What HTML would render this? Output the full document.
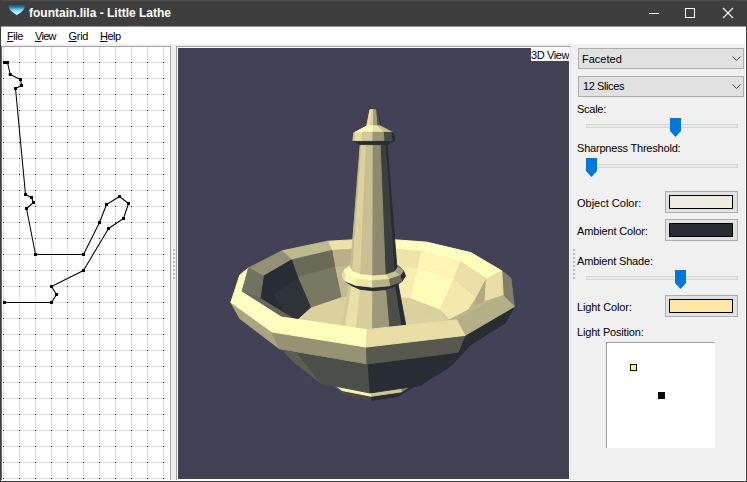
<!DOCTYPE html>
<html><head><meta charset="utf-8"><title>fountain.lila - Little Lathe</title>
<style>
html,body{margin:0;padding:0;}
body{width:747px;height:482px;overflow:hidden;background:#f0f0f0;font-family:"Liberation Sans",sans-serif;font-size:11px;color:#000;position:relative;}
.abs{position:absolute;}
#titlebar{left:0;top:0;width:747px;height:26px;background:#3e3e3e;border-top:1px solid #4c4c4c;box-sizing:border-box;}
#titleedge{left:0;top:26px;width:747px;height:1px;background:#9a9a9a;}
#title{left:29px;top:6px;color:#fff;font-weight:bold;font-size:12px;line-height:14px;white-space:nowrap;}
#menubar{left:1px;top:27px;width:745px;height:17px;background:#fff;}
.menu{top:30px;font-size:11px;line-height:12px;white-space:nowrap;}
.menu u{text-decoration:underline;text-underline-offset:1px;text-decoration-thickness:1px;}
#bl{left:0;top:0;width:1px;height:482px;background:#3d3d3d;}
#br{left:746px;top:26px;width:1px;height:456px;background:#3d3d3d;}
#bb{left:0;top:481px;width:747px;height:1px;background:#3d3d3d;}
#wr{left:745px;top:44px;width:1px;height:437px;background:#fff;}
#wb{left:1px;top:480px;width:745px;height:1px;background:#fff;}
#leftpanel{left:1px;top:46px;width:169px;height:434px;background:#fff;border-top:1px solid #a0a0a0;border-left:1px solid #696969;box-sizing:border-box;}
#view{left:178px;top:48px;width:391px;height:431px;background:#424156;}
#viewb{left:176px;top:46px;width:395px;height:435px;box-sizing:border-box;border-top:1px solid #a0a0a0;border-left:1px solid #a0a0a0;border-right:1px solid #e3e3e3;border-bottom:1px solid #fff;background:#fff;}
#lbl3d{left:531px;top:48px;width:38px;height:12px;padding-top:1px;background:#fff;font-size:11px;line-height:13px;white-space:nowrap;letter-spacing:-0.4px;overflow:hidden;}
.combo{left:578px;width:166px;height:21px;box-sizing:border-box;background:#e1e1e1;border:1px solid #adadad;}
.combo span{position:absolute;left:3px;top:3px;font-size:11px;line-height:13px;}
.lab{left:577px;font-size:11px;line-height:13px;white-space:nowrap;}
.track{left:586px;width:152px;height:4px;box-sizing:border-box;background:#e7eaea;border:1px solid #d6d6d6;}
.cbtn{left:665px;width:73px;height:22px;box-sizing:border-box;background:#e1e1e1;border:1px solid #adadad;}
.cbtn div{position:absolute;left:3px;top:3px;width:64px;height:14px;box-sizing:border-box;border:1px solid #000;}
</style></head><body>
<div id="titlebar" class="abs"></div><div id="titleedge" class="abs"></div>
<svg class="abs" style="left:0;top:0" width="747" height="27">
<defs><linearGradient id="ig" x1="0" y1="0" x2="0" y2="1"><stop offset="0" stop-color="#26405c"/><stop offset="0.28" stop-color="#2f86ae"/><stop offset="0.5" stop-color="#6fd6ec"/><stop offset="0.85" stop-color="#c8f6fb"/><stop offset="1" stop-color="#ffffff"/></linearGradient></defs>
<rect x="15.3" y="15" width="2.8" height="7" fill="#33475c" opacity="0.55"/>
<path d="M8.8 4.6 L24.8 4.6 L24.8 7 Q24 11.2 16.8 15 Q9.6 11.2 8.8 7 Z" fill="url(#ig)"/>
<path d="M649 13.5 H659" stroke="#fff" stroke-width="1"/>
<rect x="685.5" y="8.5" width="9" height="9" fill="none" stroke="#fff" stroke-width="1"/>
<path d="M723 8 L733 18 M733 8 L723 18" stroke="#fff" stroke-width="1.1"/>
</svg>
<div id="title" class="abs">fountain.lila - Little Lathe</div>
<div id="menubar" class="abs"></div>
<div class="abs menu" style="left:7px;letter-spacing:-0.45px"><u>F</u>ile</div>
<div class="abs menu" style="left:35px;letter-spacing:-0.7px"><u>V</u>iew</div>
<div class="abs menu" style="left:68.5px;letter-spacing:-0.3px"><u>G</u>rid</div>
<div class="abs menu" style="left:100px;letter-spacing:-0.5px"><u>H</u>elp</div>

<div id="leftpanel" class="abs"></div>
<svg class="abs" style="left:2px;top:47px" width="168" height="433" viewBox="2 47 168 433">
<rect x="3" y="47" width="1" height="433" fill="#dedede"/>
<rect x="19" y="47" width="1" height="433" fill="#dedede"/>
<rect x="35" y="47" width="1" height="433" fill="#dedede"/>
<rect x="51" y="47" width="1" height="433" fill="#dedede"/>
<rect x="67" y="47" width="1" height="433" fill="#dedede"/>
<rect x="83" y="47" width="1" height="433" fill="#dedede"/>
<rect x="99" y="47" width="1" height="433" fill="#dedede"/>
<rect x="115" y="47" width="1" height="433" fill="#dedede"/>
<rect x="131" y="47" width="1" height="433" fill="#dedede"/>
<rect x="147" y="47" width="1" height="433" fill="#dedede"/>
<rect x="163" y="47" width="1" height="433" fill="#dedede"/>
<rect x="2" y="62" width="166" height="1" fill="#dedede"/>
<rect x="2" y="78" width="166" height="1" fill="#dedede"/>
<rect x="2" y="94" width="166" height="1" fill="#dedede"/>
<rect x="2" y="110" width="166" height="1" fill="#dedede"/>
<rect x="2" y="126" width="166" height="1" fill="#dedede"/>
<rect x="2" y="142" width="166" height="1" fill="#dedede"/>
<rect x="2" y="158" width="166" height="1" fill="#dedede"/>
<rect x="2" y="174" width="166" height="1" fill="#dedede"/>
<rect x="2" y="190" width="166" height="1" fill="#dedede"/>
<rect x="2" y="206" width="166" height="1" fill="#dedede"/>
<rect x="2" y="222" width="166" height="1" fill="#dedede"/>
<rect x="2" y="238" width="166" height="1" fill="#dedede"/>
<rect x="2" y="254" width="166" height="1" fill="#dedede"/>
<rect x="2" y="270" width="166" height="1" fill="#dedede"/>
<rect x="2" y="286" width="166" height="1" fill="#dedede"/>
<rect x="2" y="302" width="166" height="1" fill="#dedede"/>
<rect x="2" y="318" width="166" height="1" fill="#dedede"/>
<rect x="2" y="334" width="166" height="1" fill="#dedede"/>
<rect x="2" y="350" width="166" height="1" fill="#dedede"/>
<rect x="2" y="366" width="166" height="1" fill="#dedede"/>
<rect x="2" y="382" width="166" height="1" fill="#dedede"/>
<rect x="2" y="398" width="166" height="1" fill="#dedede"/>
<rect x="2" y="414" width="166" height="1" fill="#dedede"/>
<rect x="2" y="430" width="166" height="1" fill="#dedede"/>
<rect x="2" y="446" width="166" height="1" fill="#dedede"/>
<rect x="2" y="462" width="166" height="1" fill="#dedede"/>
<rect x="2" y="478" width="166" height="1" fill="#dedede"/>
<path d="M3 62h1v1h-1zM3 78h1v1h-1zM3 94h1v1h-1zM3 110h1v1h-1zM3 126h1v1h-1zM3 142h1v1h-1zM3 158h1v1h-1zM3 174h1v1h-1zM3 190h1v1h-1zM3 206h1v1h-1zM3 222h1v1h-1zM3 238h1v1h-1zM3 254h1v1h-1zM3 270h1v1h-1zM3 286h1v1h-1zM3 302h1v1h-1zM3 318h1v1h-1zM3 334h1v1h-1zM3 350h1v1h-1zM3 366h1v1h-1zM3 382h1v1h-1zM3 398h1v1h-1zM3 414h1v1h-1zM3 430h1v1h-1zM3 446h1v1h-1zM3 462h1v1h-1zM3 478h1v1h-1zM19 62h1v1h-1zM19 78h1v1h-1zM19 94h1v1h-1zM19 110h1v1h-1zM19 126h1v1h-1zM19 142h1v1h-1zM19 158h1v1h-1zM19 174h1v1h-1zM19 190h1v1h-1zM19 206h1v1h-1zM19 222h1v1h-1zM19 238h1v1h-1zM19 254h1v1h-1zM19 270h1v1h-1zM19 286h1v1h-1zM19 302h1v1h-1zM19 318h1v1h-1zM19 334h1v1h-1zM19 350h1v1h-1zM19 366h1v1h-1zM19 382h1v1h-1zM19 398h1v1h-1zM19 414h1v1h-1zM19 430h1v1h-1zM19 446h1v1h-1zM19 462h1v1h-1zM19 478h1v1h-1zM35 62h1v1h-1zM35 78h1v1h-1zM35 94h1v1h-1zM35 110h1v1h-1zM35 126h1v1h-1zM35 142h1v1h-1zM35 158h1v1h-1zM35 174h1v1h-1zM35 190h1v1h-1zM35 206h1v1h-1zM35 222h1v1h-1zM35 238h1v1h-1zM35 254h1v1h-1zM35 270h1v1h-1zM35 286h1v1h-1zM35 302h1v1h-1zM35 318h1v1h-1zM35 334h1v1h-1zM35 350h1v1h-1zM35 366h1v1h-1zM35 382h1v1h-1zM35 398h1v1h-1zM35 414h1v1h-1zM35 430h1v1h-1zM35 446h1v1h-1zM35 462h1v1h-1zM35 478h1v1h-1zM51 62h1v1h-1zM51 78h1v1h-1zM51 94h1v1h-1zM51 110h1v1h-1zM51 126h1v1h-1zM51 142h1v1h-1zM51 158h1v1h-1zM51 174h1v1h-1zM51 190h1v1h-1zM51 206h1v1h-1zM51 222h1v1h-1zM51 238h1v1h-1zM51 254h1v1h-1zM51 270h1v1h-1zM51 286h1v1h-1zM51 302h1v1h-1zM51 318h1v1h-1zM51 334h1v1h-1zM51 350h1v1h-1zM51 366h1v1h-1zM51 382h1v1h-1zM51 398h1v1h-1zM51 414h1v1h-1zM51 430h1v1h-1zM51 446h1v1h-1zM51 462h1v1h-1zM51 478h1v1h-1zM67 62h1v1h-1zM67 78h1v1h-1zM67 94h1v1h-1zM67 110h1v1h-1zM67 126h1v1h-1zM67 142h1v1h-1zM67 158h1v1h-1zM67 174h1v1h-1zM67 190h1v1h-1zM67 206h1v1h-1zM67 222h1v1h-1zM67 238h1v1h-1zM67 254h1v1h-1zM67 270h1v1h-1zM67 286h1v1h-1zM67 302h1v1h-1zM67 318h1v1h-1zM67 334h1v1h-1zM67 350h1v1h-1zM67 366h1v1h-1zM67 382h1v1h-1zM67 398h1v1h-1zM67 414h1v1h-1zM67 430h1v1h-1zM67 446h1v1h-1zM67 462h1v1h-1zM67 478h1v1h-1zM83 62h1v1h-1zM83 78h1v1h-1zM83 94h1v1h-1zM83 110h1v1h-1zM83 126h1v1h-1zM83 142h1v1h-1zM83 158h1v1h-1zM83 174h1v1h-1zM83 190h1v1h-1zM83 206h1v1h-1zM83 222h1v1h-1zM83 238h1v1h-1zM83 254h1v1h-1zM83 270h1v1h-1zM83 286h1v1h-1zM83 302h1v1h-1zM83 318h1v1h-1zM83 334h1v1h-1zM83 350h1v1h-1zM83 366h1v1h-1zM83 382h1v1h-1zM83 398h1v1h-1zM83 414h1v1h-1zM83 430h1v1h-1zM83 446h1v1h-1zM83 462h1v1h-1zM83 478h1v1h-1zM99 62h1v1h-1zM99 78h1v1h-1zM99 94h1v1h-1zM99 110h1v1h-1zM99 126h1v1h-1zM99 142h1v1h-1zM99 158h1v1h-1zM99 174h1v1h-1zM99 190h1v1h-1zM99 206h1v1h-1zM99 222h1v1h-1zM99 238h1v1h-1zM99 254h1v1h-1zM99 270h1v1h-1zM99 286h1v1h-1zM99 302h1v1h-1zM99 318h1v1h-1zM99 334h1v1h-1zM99 350h1v1h-1zM99 366h1v1h-1zM99 382h1v1h-1zM99 398h1v1h-1zM99 414h1v1h-1zM99 430h1v1h-1zM99 446h1v1h-1zM99 462h1v1h-1zM99 478h1v1h-1zM115 62h1v1h-1zM115 78h1v1h-1zM115 94h1v1h-1zM115 110h1v1h-1zM115 126h1v1h-1zM115 142h1v1h-1zM115 158h1v1h-1zM115 174h1v1h-1zM115 190h1v1h-1zM115 206h1v1h-1zM115 222h1v1h-1zM115 238h1v1h-1zM115 254h1v1h-1zM115 270h1v1h-1zM115 286h1v1h-1zM115 302h1v1h-1zM115 318h1v1h-1zM115 334h1v1h-1zM115 350h1v1h-1zM115 366h1v1h-1zM115 382h1v1h-1zM115 398h1v1h-1zM115 414h1v1h-1zM115 430h1v1h-1zM115 446h1v1h-1zM115 462h1v1h-1zM115 478h1v1h-1zM131 62h1v1h-1zM131 78h1v1h-1zM131 94h1v1h-1zM131 110h1v1h-1zM131 126h1v1h-1zM131 142h1v1h-1zM131 158h1v1h-1zM131 174h1v1h-1zM131 190h1v1h-1zM131 206h1v1h-1zM131 222h1v1h-1zM131 238h1v1h-1zM131 254h1v1h-1zM131 270h1v1h-1zM131 286h1v1h-1zM131 302h1v1h-1zM131 318h1v1h-1zM131 334h1v1h-1zM131 350h1v1h-1zM131 366h1v1h-1zM131 382h1v1h-1zM131 398h1v1h-1zM131 414h1v1h-1zM131 430h1v1h-1zM131 446h1v1h-1zM131 462h1v1h-1zM131 478h1v1h-1zM147 62h1v1h-1zM147 78h1v1h-1zM147 94h1v1h-1zM147 110h1v1h-1zM147 126h1v1h-1zM147 142h1v1h-1zM147 158h1v1h-1zM147 174h1v1h-1zM147 190h1v1h-1zM147 206h1v1h-1zM147 222h1v1h-1zM147 238h1v1h-1zM147 254h1v1h-1zM147 270h1v1h-1zM147 286h1v1h-1zM147 302h1v1h-1zM147 318h1v1h-1zM147 334h1v1h-1zM147 350h1v1h-1zM147 366h1v1h-1zM147 382h1v1h-1zM147 398h1v1h-1zM147 414h1v1h-1zM147 430h1v1h-1zM147 446h1v1h-1zM147 462h1v1h-1zM147 478h1v1h-1zM163 62h1v1h-1zM163 78h1v1h-1zM163 94h1v1h-1zM163 110h1v1h-1zM163 126h1v1h-1zM163 142h1v1h-1zM163 158h1v1h-1zM163 174h1v1h-1zM163 190h1v1h-1zM163 206h1v1h-1zM163 222h1v1h-1zM163 238h1v1h-1zM163 254h1v1h-1zM163 270h1v1h-1zM163 286h1v1h-1zM163 302h1v1h-1zM163 318h1v1h-1zM163 334h1v1h-1zM163 350h1v1h-1zM163 366h1v1h-1zM163 382h1v1h-1zM163 398h1v1h-1zM163 414h1v1h-1zM163 430h1v1h-1zM163 446h1v1h-1zM163 462h1v1h-1zM163 478h1v1h-1z" fill="#2a2a2a"/>
<polyline points="4.5,62.5 7.5,62.5 10.2,74.5 20.5,79.5 21.5,85.5 15.5,88.5 25.5,194.5 31.5,197.5 33.5,202.5 26.5,208.5 35.5,254.5 83.5,254.5 99.5,222.5 106.5,204.5 119.5,196.5 128.5,203.5 123.5,218.5 108.5,228.5 83.5,270.5 51.5,286.5 56.5,294.5 51.5,302.5 4.5,302.5" fill="none" stroke="#000" stroke-width="1.05" stroke-linejoin="round"/>
<path d="M3.0 61.0h3v3h-3zM6.0 61.0h3v3h-3zM8.7 73.0h3v3h-3zM19.0 78.0h3v3h-3zM20.0 84.0h3v3h-3zM14.0 87.0h3v3h-3zM24.0 193.0h3v3h-3zM30.0 196.0h3v3h-3zM32.0 201.0h3v3h-3zM25.0 207.0h3v3h-3zM34.0 253.0h3v3h-3zM82.0 253.0h3v3h-3zM98.0 221.0h3v3h-3zM105.0 203.0h3v3h-3zM118.0 195.0h3v3h-3zM127.0 202.0h3v3h-3zM122.0 217.0h3v3h-3zM107.0 227.0h3v3h-3zM82.0 269.0h3v3h-3zM50.0 285.0h3v3h-3zM55.0 293.0h3v3h-3zM50.0 301.0h3v3h-3zM3.0 301.0h3v3h-3z" fill="#000"/>
</svg>
<div class="abs" style="left:170px;top:46px;width:1px;height:434px;background:#a8a8a8"></div>

<div id="viewb" class="abs"></div>
<div id="view" class="abs"></div>
<svg class="abs" style="left:178px;top:48px" width="391" height="431" viewBox="178 48 391 431" shape-rendering="auto">
<polygon points="376.8,247.7 331.9,250.5 327.5,241.2 377.1,238.4" fill="#ede2a8" stroke="#ede2a8" stroke-width="0.9" stroke-linejoin="round"/>
<polygon points="421.4,251.4 376.8,247.7 377.1,238.4 426.5,242.1" fill="#fffeba" stroke="#fffeba" stroke-width="0.9" stroke-linejoin="round"/>
<polygon points="376.6,264.1 334.8,267.1 331.9,250.5 376.8,247.7" fill="#b7b088" stroke="#b7b088" stroke-width="0.9" stroke-linejoin="round"/>
<polygon points="418.1,268.1 376.6,264.1 376.8,247.7 421.4,251.4" fill="#eee3a9" stroke="#eee3a9" stroke-width="0.9" stroke-linejoin="round"/>
<polygon points="376.1,294.7 341.1,297.8 334.8,267.1 376.6,264.1" fill="#c3bb8f" stroke="#c3bb8f" stroke-width="0.9" stroke-linejoin="round"/>
<polygon points="410.8,298.8 376.1,294.7 376.6,264.1 418.1,268.1" fill="#f8ecae" stroke="#f8ecae" stroke-width="0.9" stroke-linejoin="round"/>
<polygon points="331.9,250.5 291.5,259.9 282.0,250.8 327.5,241.2" fill="#c0b98e" stroke="#c0b98e" stroke-width="0.9" stroke-linejoin="round"/>
<polygon points="334.8,267.1 297.6,277.2 291.5,259.9 331.9,250.5" fill="#6a6a5a" stroke="#6a6a5a" stroke-width="0.9" stroke-linejoin="round"/>
<polygon points="460.7,261.7 421.4,251.4 426.5,242.1 470.9,252.6" fill="#ffffc1" stroke="#ffffc1" stroke-width="0.9" stroke-linejoin="round"/>
<polygon points="341.1,297.8 310.8,308.1 297.6,277.2 334.8,267.1" fill="#797863" stroke="#797863" stroke-width="0.9" stroke-linejoin="round"/>
<polygon points="440.0,310.1 410.8,298.8 418.1,268.1 454.1,279.1" fill="#fffcb9" stroke="#fffcb9" stroke-width="0.9" stroke-linejoin="round"/>
<polygon points="454.1,279.1 418.1,268.1 421.4,251.4 460.7,261.7" fill="#fff4b4" stroke="#fff4b4" stroke-width="0.9" stroke-linejoin="round"/>
<polygon points="374.8,312.6 359.6,314.1 341.1,297.8 376.1,294.7" fill="#dad19d" stroke="#dad19d" stroke-width="0.9" stroke-linejoin="round"/>
<polygon points="389.7,314.5 374.8,312.6 376.1,294.7 410.8,298.8" fill="#dad19d" stroke="#dad19d" stroke-width="0.9" stroke-linejoin="round"/>
<polygon points="359.6,314.1 347.4,318.8 310.8,308.1 341.1,297.8" fill="#dad19d" stroke="#dad19d" stroke-width="0.9" stroke-linejoin="round"/>
<polygon points="401.2,319.7 389.7,314.5 410.8,298.8 440.0,310.1" fill="#dad19d" stroke="#dad19d" stroke-width="0.9" stroke-linejoin="round"/>
<polygon points="421.5,356.5 413.5,344.1 417.2,349.7 426.2,363.6" fill="#272d33" stroke="#272d33" stroke-width="0.9" stroke-linejoin="round"/>
<polygon points="310.8,308.1 292.0,325.2 272.6,294.3 297.6,277.2" fill="#2e3337" stroke="#2e3337" stroke-width="0.9" stroke-linejoin="round"/>
<polygon points="291.5,259.9 263.4,276.2 248.5,267.9 282.0,250.8" fill="#949073" stroke="#949073" stroke-width="0.9" stroke-linejoin="round"/>
<polygon points="297.6,277.2 272.6,294.3 263.4,276.2 291.5,259.9" fill="#272d33" stroke="#272d33" stroke-width="0.9" stroke-linejoin="round"/>
<polygon points="456.7,327.9 440.0,310.1 454.1,279.1 476.7,297.2" fill="#f4e8ac" stroke="#f4e8ac" stroke-width="0.9" stroke-linejoin="round"/>
<polygon points="347.4,318.8 341.5,326.0 292.0,325.2 310.8,308.1" fill="#dad19d" stroke="#dad19d" stroke-width="0.9" stroke-linejoin="round"/>
<polygon points="486.3,279.0 460.7,261.7 470.9,252.6 501.8,270.8" fill="#fffdb9" stroke="#fffdb9" stroke-width="0.9" stroke-linejoin="round"/>
<polygon points="476.7,297.2 454.1,279.1 460.7,261.7 486.3,279.0" fill="#eadfa6" stroke="#eadfa6" stroke-width="0.9" stroke-linejoin="round"/>
<polygon points="406.1,327.1 401.2,319.7 440.0,310.1 456.7,327.9" fill="#dad19d" stroke="#dad19d" stroke-width="0.9" stroke-linejoin="round"/>
<polygon points="326.3,354.7 329.1,368.4 324.4,377.2 321.7,361.6" fill="#fdf0b1" stroke="#fdf0b1" stroke-width="0.9" stroke-linejoin="round"/>
<polygon points="416.8,370.2 421.5,356.5 426.2,363.6 421.4,379.3" fill="#404442" stroke="#404442" stroke-width="0.9" stroke-linejoin="round"/>
<polygon points="324.4,377.2 342.4,390.6 346.0,395.1 329.8,383.0" fill="#585a50" stroke="#585a50" stroke-width="0.9" stroke-linejoin="round"/>
<polygon points="401.5,391.9 421.4,379.3 416.2,384.9 398.3,396.3" fill="#272d33" stroke="#272d33" stroke-width="0.9" stroke-linejoin="round"/>
<polygon points="341.5,326.0 344.0,333.9 293.0,346.6 292.0,325.2" fill="#dad19d" stroke="#dad19d" stroke-width="0.9" stroke-linejoin="round"/>
<polygon points="329.1,368.4 345.5,380.0 342.4,390.6 324.4,377.2" fill="#ffffbd" stroke="#ffffbd" stroke-width="0.9" stroke-linejoin="round"/>
<polygon points="398.7,381.1 416.8,370.2 421.4,379.3 401.5,391.9" fill="#87856c" stroke="#87856c" stroke-width="0.9" stroke-linejoin="round"/>
<polygon points="402.3,334.9 406.1,327.1 456.7,327.9 452.2,349.6" fill="#dad19d" stroke="#dad19d" stroke-width="0.9" stroke-linejoin="round"/>
<polygon points="292.0,325.2 293.0,346.6 271.1,317.0 272.6,294.3" fill="#272d33" stroke="#272d33" stroke-width="0.9" stroke-linejoin="round"/>
<polygon points="349.8,281.4 351.9,285.8 344.0,333.9 341.5,326.0" fill="#d3ca99" stroke="#d3ca99" stroke-width="0.9" stroke-linejoin="round"/>
<polygon points="342.4,390.6 371.5,396.3 371.8,400.3 346.0,395.1" fill="#474a46" stroke="#474a46" stroke-width="0.9" stroke-linejoin="round"/>
<polygon points="371.5,396.3 401.5,391.9 398.3,396.3 371.8,400.3" fill="#272d33" stroke="#272d33" stroke-width="0.9" stroke-linejoin="round"/>
<polygon points="354.6,263.4 350.6,266.9 344.1,270.0 349.5,265.4" fill="#ebe0a7" stroke="#ebe0a7" stroke-width="0.9" stroke-linejoin="round"/>
<polygon points="394.7,286.3 397.7,282.0 406.1,327.1 402.3,334.9" fill="#272d33" stroke="#272d33" stroke-width="0.9" stroke-linejoin="round"/>
<polygon points="396.9,267.5 393.6,263.9 399.1,266.0 403.5,270.7" fill="#85836b" stroke="#85836b" stroke-width="0.9" stroke-linejoin="round"/>
<polygon points="345.5,380.0 371.8,384.9 371.5,396.3 342.4,390.6" fill="#fff3b3" stroke="#fff3b3" stroke-width="0.9" stroke-linejoin="round"/>
<polygon points="452.2,349.6 456.7,327.9 476.7,297.2 474.0,320.2" fill="#bcb58b" stroke="#bcb58b" stroke-width="0.9" stroke-linejoin="round"/>
<polygon points="371.8,384.9 398.7,381.1 401.5,391.9 371.5,396.3" fill="#cdc595" stroke="#cdc595" stroke-width="0.9" stroke-linejoin="round"/>
<polygon points="272.6,294.3 271.1,317.0 260.1,298.3 263.4,276.2" fill="#272d33" stroke="#272d33" stroke-width="0.9" stroke-linejoin="round"/>
<polygon points="351.9,285.8 360.3,289.3 355.3,340.3 344.0,333.9" fill="#ebe0a7" stroke="#ebe0a7" stroke-width="0.9" stroke-linejoin="round"/>
<polygon points="344.1,270.0 346.5,275.0 344.5,280.8 342.0,275.1" fill="#ebe0a7" stroke="#ebe0a7" stroke-width="0.9" stroke-linejoin="round"/>
<polygon points="248.5,267.9 241.9,291.9 230.8,302.4 239.8,274.9" fill="#fffeba" stroke="#fffeba" stroke-width="0.9" stroke-linejoin="round"/>
<polygon points="385.6,289.6 394.7,286.3 402.3,334.9 390.0,341.0" fill="#4c4f49" stroke="#4c4f49" stroke-width="0.9" stroke-linejoin="round"/>
<polygon points="350.6,266.9 352.6,270.8 346.5,275.0 344.1,270.0" fill="#fffab7" stroke="#fffab7" stroke-width="0.9" stroke-linejoin="round"/>
<polygon points="263.4,276.2 260.1,298.3 241.9,291.9 248.5,267.9" fill="#727260" stroke="#727260" stroke-width="0.9" stroke-linejoin="round"/>
<polygon points="399.9,275.7 403.5,270.7 405.5,275.9 401.8,281.5" fill="#272d33" stroke="#272d33" stroke-width="0.9" stroke-linejoin="round"/>
<polygon points="394.0,271.2 396.9,267.5 403.5,270.7 399.9,275.7" fill="#a29d7c" stroke="#a29d7c" stroke-width="0.9" stroke-linejoin="round"/>
<polygon points="344.0,333.9 355.3,340.3 320.6,366.3 293.0,346.6" fill="#dad19d" stroke="#dad19d" stroke-width="0.9" stroke-linejoin="round"/>
<polygon points="474.0,320.2 476.7,297.2 486.3,279.0 484.9,301.5" fill="#b0aa84" stroke="#b0aa84" stroke-width="0.9" stroke-linejoin="round"/>
<polygon points="390.0,341.0 402.3,334.9 452.2,349.6 421.1,368.4" fill="#dad19d" stroke="#dad19d" stroke-width="0.9" stroke-linejoin="round"/>
<polygon points="360.3,289.3 372.8,290.7 372.4,343.0 355.3,340.3" fill="#d7ce9b" stroke="#d7ce9b" stroke-width="0.9" stroke-linejoin="round"/>
<polygon points="372.8,290.7 385.6,289.6 390.0,341.0 372.4,343.0" fill="#9d9979" stroke="#9d9979" stroke-width="0.9" stroke-linejoin="round"/>
<polygon points="503.2,295.5 501.8,270.8 511.0,278.2 514.4,306.6" fill="#817f68" stroke="#817f68" stroke-width="0.9" stroke-linejoin="round"/>
<polygon points="484.9,301.5 486.3,279.0 501.8,270.8 503.2,295.5" fill="#e9dea5" stroke="#e9dea5" stroke-width="0.9" stroke-linejoin="round"/>
<polygon points="344.5,280.8 355.6,285.3 360.3,289.3 351.9,285.8" fill="#272d33" stroke="#272d33" stroke-width="0.9" stroke-linejoin="round"/>
<polygon points="389.7,285.8 401.8,281.5 394.7,286.3 385.6,289.6" fill="#272d33" stroke="#272d33" stroke-width="0.9" stroke-linejoin="round"/>
<polygon points="352.6,270.8 360.8,273.8 356.9,279.1 346.5,275.0" fill="#ffffbe" stroke="#ffffbe" stroke-width="0.9" stroke-linejoin="round"/>
<polygon points="346.5,275.0 356.9,279.1 355.6,285.3 344.5,280.8" fill="#fff5b4" stroke="#fff5b4" stroke-width="0.9" stroke-linejoin="round"/>
<polygon points="385.2,274.1 394.0,271.2 399.9,275.7 388.6,279.5" fill="#c8c092" stroke="#c8c092" stroke-width="0.9" stroke-linejoin="round"/>
<polygon points="360.2,144.5 361.6,144.6 352.6,270.8 350.6,266.9" fill="#c4bc90" stroke="#c4bc90" stroke-width="0.9" stroke-linejoin="round"/>
<polygon points="388.6,279.5 399.9,275.7 401.8,281.5 389.7,285.8" fill="#6b6b5b" stroke="#6b6b5b" stroke-width="0.9" stroke-linejoin="round"/>
<polygon points="385.4,144.6 387.2,144.5 396.9,267.5 394.0,271.2" fill="#272d33" stroke="#272d33" stroke-width="0.9" stroke-linejoin="round"/>
<polygon points="369.9,109.8 370.3,109.6 367.4,125.9 366.6,126.1" fill="#d7ce9b" stroke="#d7ce9b" stroke-width="0.9" stroke-linejoin="round"/>
<polygon points="376.9,109.6 377.5,109.8 380.8,126.1 379.8,125.9" fill="#272d33" stroke="#272d33" stroke-width="0.9" stroke-linejoin="round"/>
<polygon points="355.6,285.3 372.5,287.2 372.8,290.7 360.3,289.3" fill="#272d33" stroke="#272d33" stroke-width="0.9" stroke-linejoin="round"/>
<polygon points="372.5,287.2 389.7,285.8 385.6,289.6 372.8,290.7" fill="#272d33" stroke="#272d33" stroke-width="0.9" stroke-linejoin="round"/>
<polygon points="366.6,126.1 367.4,125.9 355.7,132.5 353.9,132.8" fill="#fff9b7" stroke="#fff9b7" stroke-width="0.9" stroke-linejoin="round"/>
<polygon points="370.3,109.6 371.7,109.5 369.9,125.8 367.4,125.9" fill="#efe3a9" stroke="#efe3a9" stroke-width="0.9" stroke-linejoin="round"/>
<polygon points="375.5,109.5 376.9,109.6 379.8,125.9 377.1,125.8" fill="#51534c" stroke="#51534c" stroke-width="0.9" stroke-linejoin="round"/>
<polygon points="355.3,340.3 372.4,343.0 370.0,375.3 320.6,366.3" fill="#dad19d" stroke="#dad19d" stroke-width="0.9" stroke-linejoin="round"/>
<polygon points="352.8,140.6 354.7,140.6 361.6,144.6 360.2,144.5" fill="#272d33" stroke="#272d33" stroke-width="0.9" stroke-linejoin="round"/>
<polygon points="379.8,125.9 380.8,126.1 393.6,132.7 391.0,132.5" fill="#a49f7d" stroke="#a49f7d" stroke-width="0.9" stroke-linejoin="round"/>
<polygon points="360.8,273.8 372.8,275.0 372.6,280.8 356.9,279.1" fill="#fffcb8" stroke="#fffcb8" stroke-width="0.9" stroke-linejoin="round"/>
<polygon points="353.9,132.8 355.7,132.5 354.7,140.6 352.8,140.6" fill="#cfc696" stroke="#cfc696" stroke-width="0.9" stroke-linejoin="round"/>
<polygon points="372.8,275.0 385.2,274.1 388.6,279.5 372.6,280.8" fill="#eee3a8" stroke="#eee3a8" stroke-width="0.9" stroke-linejoin="round"/>
<polygon points="371.7,109.5 373.6,109.5 373.4,125.8 369.9,125.8" fill="#dbd19d" stroke="#dbd19d" stroke-width="0.9" stroke-linejoin="round"/>
<polygon points="373.6,109.5 375.5,109.5 377.1,125.8 373.4,125.8" fill="#a19d7b" stroke="#a19d7b" stroke-width="0.9" stroke-linejoin="round"/>
<polygon points="392.0,140.6 394.7,140.6 387.2,144.5 385.4,144.6" fill="#272d33" stroke="#272d33" stroke-width="0.9" stroke-linejoin="round"/>
<polygon points="372.4,343.0 390.0,341.0 421.1,368.4 370.0,375.3" fill="#dad19d" stroke="#dad19d" stroke-width="0.9" stroke-linejoin="round"/>
<polygon points="391.0,132.5 393.6,132.7 394.7,140.6 392.0,140.6" fill="#272d33" stroke="#272d33" stroke-width="0.9" stroke-linejoin="round"/>
<polygon points="356.9,279.1 372.6,280.8 372.5,287.2 355.6,285.3" fill="#efe4a9" stroke="#efe4a9" stroke-width="0.9" stroke-linejoin="round"/>
<polygon points="372.6,280.8 388.6,279.5 389.7,285.8 372.5,287.2" fill="#b8b289" stroke="#b8b289" stroke-width="0.9" stroke-linejoin="round"/>
<polygon points="361.6,144.6 366.3,144.6 360.8,273.8 352.6,270.8" fill="#dcd29e" stroke="#dcd29e" stroke-width="0.9" stroke-linejoin="round"/>
<polygon points="380.2,144.6 385.4,144.6 394.0,271.2 385.2,274.1" fill="#3b403f" stroke="#3b403f" stroke-width="0.9" stroke-linejoin="round"/>
<polygon points="367.4,125.9 369.9,125.8 362.7,132.3 355.7,132.5" fill="#ffffbd" stroke="#ffffbd" stroke-width="0.9" stroke-linejoin="round"/>
<polygon points="260.6,326.0 296.2,351.8 321.5,383.5 294.3,362.6" fill="#5d5e53" stroke="#5d5e53" stroke-width="0.9" stroke-linejoin="round"/>
<polygon points="377.1,125.8 379.8,125.9 391.0,132.5 383.4,132.3" fill="#c9c193" stroke="#c9c193" stroke-width="0.9" stroke-linejoin="round"/>
<polygon points="354.7,140.6 362.0,140.6 366.3,144.6 361.6,144.6" fill="#272d33" stroke="#272d33" stroke-width="0.9" stroke-linejoin="round"/>
<polygon points="384.0,140.6 392.0,140.6 385.4,144.6 380.2,144.6" fill="#272d33" stroke="#272d33" stroke-width="0.9" stroke-linejoin="round"/>
<polygon points="369.9,125.8 373.4,125.8 373.0,132.2 362.7,132.3" fill="#fffbb8" stroke="#fffbb8" stroke-width="0.9" stroke-linejoin="round"/>
<polygon points="366.3,144.6 373.2,144.6 372.8,275.0 360.8,273.8" fill="#c8c092" stroke="#c8c092" stroke-width="0.9" stroke-linejoin="round"/>
<polygon points="373.4,125.8 377.1,125.8 383.4,132.3 373.0,132.2" fill="#eee3a8" stroke="#eee3a8" stroke-width="0.9" stroke-linejoin="round"/>
<polygon points="373.2,144.6 380.2,144.6 385.2,274.1 372.8,275.0" fill="#8d8a6f" stroke="#8d8a6f" stroke-width="0.9" stroke-linejoin="round"/>
<polygon points="355.7,132.5 362.7,132.3 362.0,140.6 354.7,140.6" fill="#e7dca4" stroke="#e7dca4" stroke-width="0.9" stroke-linejoin="round"/>
<polygon points="383.4,132.3 391.0,132.5 392.0,140.6 384.0,140.6" fill="#474b46" stroke="#474b46" stroke-width="0.9" stroke-linejoin="round"/>
<polygon points="443.1,354.6 484.5,329.8 451.0,365.7 420.2,385.6" fill="#272d33" stroke="#272d33" stroke-width="0.9" stroke-linejoin="round"/>
<polygon points="362.0,140.6 372.9,140.6 373.2,144.6 366.3,144.6" fill="#272d33" stroke="#272d33" stroke-width="0.9" stroke-linejoin="round"/>
<polygon points="372.9,140.6 384.0,140.6 380.2,144.6 373.2,144.6" fill="#272d33" stroke="#272d33" stroke-width="0.9" stroke-linejoin="round"/>
<polygon points="362.7,132.3 373.0,132.2 372.9,140.6 362.0,140.6" fill="#d3ca98" stroke="#d3ca98" stroke-width="0.9" stroke-linejoin="round"/>
<polygon points="373.0,132.2 383.4,132.3 384.0,140.6 372.9,140.6" fill="#999576" stroke="#999576" stroke-width="0.9" stroke-linejoin="round"/>
<polygon points="296.2,351.8 368.2,364.3 370.0,393.0 321.5,383.5" fill="#4c4e49" stroke="#4c4e49" stroke-width="0.9" stroke-linejoin="round"/>
<polygon points="368.2,364.3 443.1,354.6 420.2,385.6 370.0,393.0" fill="#272d33" stroke="#272d33" stroke-width="0.9" stroke-linejoin="round"/>
<polygon points="260.1,298.3 295.9,320.3 281.3,317.0 241.9,291.9" fill="#656658" stroke="#656658" stroke-width="0.9" stroke-linejoin="round"/>
<polygon points="230.8,302.4 272.0,332.0 279.6,348.9 239.9,318.7" fill="#aaa480" stroke="#aaa480" stroke-width="0.9" stroke-linejoin="round"/>
<polygon points="241.9,291.9 281.3,317.0 272.0,332.0 230.8,302.4" fill="#ffffc3" stroke="#ffffc3" stroke-width="0.9" stroke-linejoin="round"/>
<polygon points="443.4,322.8 484.9,301.5 503.2,295.5 456.6,319.8" fill="#bcb58b" stroke="#bcb58b" stroke-width="0.9" stroke-linejoin="round"/>
<polygon points="465.1,335.4 514.4,306.6 505.2,323.1 458.2,352.3" fill="#272d33" stroke="#272d33" stroke-width="0.9" stroke-linejoin="round"/>
<polygon points="456.6,319.8 503.2,295.5 514.4,306.6 465.1,335.4" fill="#b5af87" stroke="#b5af87" stroke-width="0.9" stroke-linejoin="round"/>
<polygon points="279.6,348.9 366.9,364.0 368.2,364.3 296.2,351.8" fill="#272d33" stroke="#272d33" stroke-width="0.9" stroke-linejoin="round"/>
<polygon points="366.9,364.0 458.2,352.3 443.1,354.6 368.2,364.3" fill="#272d33" stroke="#272d33" stroke-width="0.9" stroke-linejoin="round"/>
<polygon points="272.0,332.0 366.3,347.1 366.9,364.0 279.6,348.9" fill="#969275" stroke="#969275" stroke-width="0.9" stroke-linejoin="round"/>
<polygon points="366.3,347.1 465.1,335.4 458.2,352.3 366.9,364.0" fill="#57594f" stroke="#57594f" stroke-width="0.9" stroke-linejoin="round"/>
<polygon points="281.3,317.0 367.0,329.6 366.3,347.1 272.0,332.0" fill="#ffffbb" stroke="#ffffbb" stroke-width="0.9" stroke-linejoin="round"/>
<polygon points="367.0,329.6 456.6,319.8 465.1,335.4 366.3,347.1" fill="#e9dea5" stroke="#e9dea5" stroke-width="0.9" stroke-linejoin="round"/>
</svg>
<div id="lbl3d" class="abs">3D View</div>

<div class="abs combo" style="top:48px"><span style="top:4px">Faceted</span></div>
<div class="abs combo" style="top:76px"><span style="letter-spacing:-0.4px;left:4px">12 Slices</span></div>
<svg class="abs" style="left:730.7px;top:54.3px" width="12" height="40"><path d="M1.5 2.5 L5.5 6.5 L9.5 2.5 M1.5 30.5 L5.5 34.5 L9.5 30.5" fill="none" stroke="#444" stroke-width="1"/></svg>
<div class="abs lab" style="top:103px;letter-spacing:-0.26px">Scale:</div>
<div class="abs track" style="top:124px"></div>
<div class="abs lab" style="top:142px;letter-spacing:-0.2px">Sharpness Threshold:</div>
<div class="abs track" style="top:164px"></div>
<div class="abs lab" style="top:197px">Object Color:</div>
<div class="abs cbtn" style="top:191px"><div style="background:#eeebe0"></div></div>
<div class="abs lab" style="top:225px;letter-spacing:-0.15px">Ambient Color:</div>
<div class="abs cbtn" style="top:219px"><div style="background:#272d33"></div></div>
<div class="abs lab" style="top:255px;letter-spacing:-0.18px">Ambient Shade:</div>
<div class="abs track" style="top:276px"></div>
<div class="abs lab" style="top:301px;letter-spacing:-0.12px">Light Color:</div>
<div class="abs cbtn" style="top:295px"><div style="background:#ffe6a4"></div></div>
<div class="abs lab" style="top:326px;letter-spacing:-0.17px">Light Position:</div>
<div class="abs" style="left:606px;top:342px;width:109px;height:105px;background:#fff;border-top:1px solid #a0a0a0;border-left:1px solid #a0a0a0;box-sizing:content-box;width:108px;height:105px"></div>
<div class="abs" style="left:630px;top:364px;width:7px;height:7px;box-sizing:border-box;border:1px solid #000;background:#ffff3c"></div>
<div class="abs" style="left:658px;top:392px;width:7px;height:7px;background:#000"></div>
<svg class="abs" style="left:0;top:0" width="747" height="482">
<g fill="#0078d7">
<path d="M670 118 H681 V131 L675.5 137 L670 131 Z"/>
<path d="M586 158 H597 V171 L591.5 177 L586 171 Z"/>
<path d="M675 270 H686 V283 L680.5 289 L675 283 Z"/>
</g>
<g fill="#b8b8b8">
<rect x="173" y="249" width="2" height="2"/><rect x="573" y="249" width="2" height="2"/><rect x="173" y="253" width="2" height="2"/><rect x="573" y="253" width="2" height="2"/><rect x="173" y="257" width="2" height="2"/><rect x="573" y="257" width="2" height="2"/><rect x="173" y="261" width="2" height="2"/><rect x="573" y="261" width="2" height="2"/><rect x="173" y="265" width="2" height="2"/><rect x="573" y="265" width="2" height="2"/><rect x="173" y="269" width="2" height="2"/><rect x="573" y="269" width="2" height="2"/><rect x="173" y="273" width="2" height="2"/><rect x="573" y="273" width="2" height="2"/><rect x="173" y="277" width="2" height="2"/><rect x="573" y="277" width="2" height="2"/>
</g>
</svg>
<div id="bl" class="abs"></div><div id="br" class="abs"></div><div id="bb" class="abs"></div><div id="wr" class="abs"></div><div id="wb" class="abs"></div>
</body></html>
